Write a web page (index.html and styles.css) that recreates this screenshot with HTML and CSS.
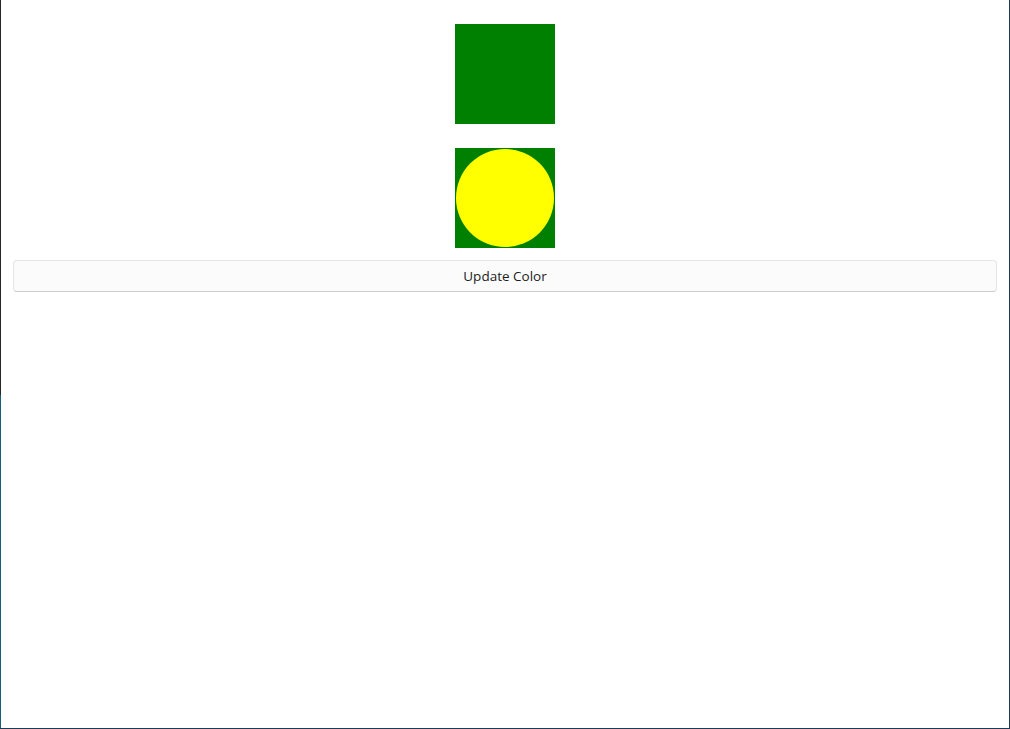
FILE: index.html
```html
<!DOCTYPE html>
<html>
<head>
<meta charset="utf-8">
<link rel="stylesheet" href="styles.css">
</head>
<body>
<div class="frame">
  <div class="content">
    <div class="square"></div>
    <div class="square circle-box"><div class="circle"></div></div>
    <button class="btn">Update Color</button>
  </div>
</div>
</body>
</html>
```
FILE: styles.css
```css
* { box-sizing: border-box; }
html, body { margin: 0; padding: 0; background: #fff; }
.frame {
  width: 1010px;
  height: 729px;
  padding-left: 1px;
  border-right: 1px solid #1d3a58;
  border-bottom: 1px solid #1d3a58;
  background:
    linear-gradient(#262626, #262626) left top / 1px 395px no-repeat,
    linear-gradient(#156079, #156079) left 395px / 1px 334px no-repeat,
    #ffffff;
}
.content {
  display: flex;
  flex-direction: column;
  align-items: center;
  padding: 24px 12px 0 12px;
}
.square {
  width: 100px;
  height: 100px;
  background: #008000;
}
.circle-box {
  margin-top: 24px;
  padding: 1px;
}
.circle {
  width: 98px;
  height: 98px;
  border-radius: 50%;
  background: #ffff00;
}
.btn {
  margin-top: 12px;
  width: 100%;
  height: 32px;
  background: #fbfbfb;
  border: 1px solid #e5e5e5;
  border-bottom-color: #cccccc;
  border-radius: 4px;
  font-family: "Open Sans", "Noto Sans", sans-serif;
  font-size: 13.5px;
  color: #1b1b1b;
  padding: 0;
}
```
